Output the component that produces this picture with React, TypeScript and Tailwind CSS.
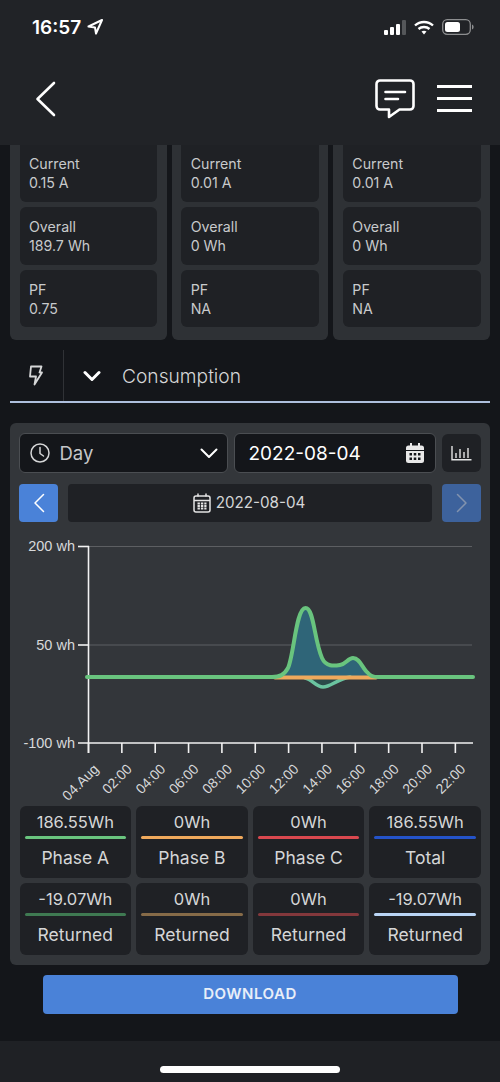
import React from "react";

const Phase = ({ label, value }: { label: string; value: string }) => (
  <div className="flex flex-col text-[14.2px] leading-[19px] text-[#c8cacc]">
    <span>{label}</span>
    <span>{value}</span>
  </div>
);

const cols = [
  { current: "0.15 A", overall: "189.7 Wh", pf: "0.75" },
  { current: "0.01 A", overall: "0 Wh", pf: "NA" },
  { current: "0.01 A", overall: "0 Wh", pf: "NA" },
];

const stats = [
  { v: "186.55Wh", l: "Phase A", c: "bg-[#69c47e]" },
  { v: "0Wh", l: "Phase B", c: "bg-[#efa95c]" },
  { v: "0Wh", l: "Phase C", c: "bg-[#d9484f]" },
  { v: "186.55Wh", l: "Total", c: "bg-[#2453c9]" },
  { v: "-19.07Wh", l: "Returned", c: "bg-[#3f7a52]" },
  { v: "0Wh", l: "Returned", c: "bg-[#866b48]" },
  { v: "0Wh", l: "Returned", c: "bg-[#83383c]" },
  { v: "-19.07Wh", l: "Returned", c: "bg-[#b9d4f5]" },
];

const xLabels = ["04.Aug", "02:00", "04:00", "06:00", "08:00", "10:00", "12:00", "14:00", "16:00", "18:00", "20:00", "22:00"];

const curve =
  "C280 677 284 675 288 668 C294 655 296 608 305.500 608 C314 608 314 640 322 658 C326 667 334 666 340 665 C346 664 348 658 353 658 C360 658 362 668 368 673 C370 676 373 677 378 677";

const Chart = () => (
  <svg width="462" height="274" viewBox="19 530 462 274" className="block">
    <g stroke="#5d5f62" strokeWidth="1.200">
      <line x1="89" x2="472" y1="546.500" y2="546.500" />
      <line x1="89" x2="472" y1="645" y2="645" />
    </g>
    <g stroke="#f2f2f2" strokeWidth="1.600">
      <line x1="88.500" x2="88.500" y1="546" y2="753" />
      <line x1="78" x2="473" y1="743" y2="743" />
      <line x1="78" x2="89" y1="546.500" y2="546.500" />
      <line x1="78" x2="89" y1="645" y2="645" />
      {xLabels.map((_, i) => {
        const x = 88.500 + i * 33.350;
        return <line key={i} x1={x} x2={x} y1="743" y2="753" />;
      })}
    </g>
    <g fill="#d8d9da" fontFamily="'Liberation Sans', Arial, sans-serif" fontSize="14.500" textAnchor="end">
      <text x="75" y="551">200 wh</text>
      <text x="75" y="650">50 wh</text>
      <text x="75" y="748">-100 wh</text>
    </g>
    <g fill="#d8d9da" fontFamily="'Liberation Sans', Arial, sans-serif" fontSize="14" textAnchor="end">
      {xLabels.map((t, i) => {
        const x = 99.500 + i * 33.350;
        return (
          <text key={t} x={x} y="770" transform={`rotate(-45 ${x} 770)`}>
            {t}
          </text>
        );
      })}
    </g>
    <path d={`M272 677 ${curve} Z`} fill="#2f6578" />
    <path d="M305 677 C312 679 316 687 323 687 C331 687 337 679 350 677 Z" fill="#2b4b4a" />
    <path d="M305 678 C312 679 316 687 323 687 C331 687 337 679 350 677" fill="none" stroke="#6bc4a0" strokeWidth="3.500" strokeLinecap="round" />
    <line x1="275" x2="376" y1="677.500" y2="677.500" stroke="#efa95c" strokeWidth="4" strokeLinecap="round" />
    <path d={`M87 677 L272 677 ${curve} L473 677`} fill="none" stroke="#69c47e" strokeWidth="4" strokeLinecap="round" strokeLinejoin="round" />
  </svg>
);

export default function App() {
  return (
    <div className="flex h-[1082px] w-[500px] flex-col overflow-hidden bg-[#14161a] font-['Inter',sans-serif]">
      <header className="flex h-[145px] shrink-0 flex-col bg-[#212327] text-white">
        <div className="flex h-[54px] items-center justify-between pl-[32px] pr-[26px]">
          <div className="flex items-center gap-[6px]">
            <span className="text-[19px] font-semibold leading-none">16:57</span>
            <svg width="16" height="16" viewBox="0 0 16 16" fill="none" stroke="white" strokeWidth="2" strokeLinejoin="round">
              <path d="M15 1 1.500 7.500 8 8.500 9 14.500Z" />
            </svg>
          </div>
          <div className="flex items-center gap-[8px]">
            <svg width="22" height="15" viewBox="0 0 22 15">
              <rect x="0" y="10" width="4" height="5" rx="1" fill="white" />
              <rect x="6" y="7" width="4" height="8" rx="1" fill="white" />
              <rect x="12" y="4" width="4" height="11" rx="1" fill="white" />
              <rect x="18" y="0" width="4" height="15" rx="1" fill="#55575a" />
            </svg>
            <svg width="20" height="15" viewBox="0 0 20 15" fill="none" stroke="white" strokeWidth="2.400">
              <path d="M1 5.500C6 .8 14 .8 19 5.500" />
              <path d="M4.500 9C7.500 6.300 12.500 6.300 15.500 9" />
              <path d="M10 14.500 7.500 11.500C9 10.500 11 10.500 12.500 11.500Z" fill="white" stroke="none" />
            </svg>
            <svg width="32" height="16" viewBox="0 0 32 16" fill="none">
              <rect x="0.700" y="0.700" width="27.600" height="14.600" rx="4.500" stroke="#8d8e90" strokeWidth="1.300" />
              <rect x="3" y="3" width="15" height="10" rx="2.500" fill="white" />
              <path d="M30 5.500c1.200.4 1.600 1.400 1.600 2.500s-.4 2.100-1.600 2.500Z" fill="#8d8e90" />
            </svg>
          </div>
        </div>
        <div className="flex flex-1 items-start justify-between pl-[35px] pr-[28px] pt-[25px]">
          <svg width="22" height="36" viewBox="0 0 22 36" className="mt-[2px]" fill="none" stroke="white" strokeWidth="2.600" strokeLinecap="round" strokeLinejoin="round">
            <path d="M19 2 2.500 18 19 34" />
          </svg>
          <div className="flex items-start gap-[22px]">
            <svg width="40" height="40" viewBox="0 0 40 40" fill="none" stroke="white" strokeLinejoin="round" strokeLinecap="round">
              <path d="M5 1.500H35A3.500 3.500 0 0 1 38.500 5V27A3.500 3.500 0 0 1 35 30.500H24.500L14 38V30.500H5A3.500 3.500 0 0 1 1.500 27V5A3.500 3.500 0 0 1 5 1.500Z" strokeWidth="2.600" />
              <path d="M10.500 13H30M10.500 20H23" strokeWidth="2.600" />
            </svg>
            <div className="mt-[6px] flex w-[35px] flex-col gap-[9px]">
              <span className="h-[3px] bg-white" />
              <span className="h-[3px] bg-white" />
              <span className="h-[3px] bg-white" />
            </div>
          </div>
        </div>
      </header>

      <main className="flex flex-1 flex-col px-[10px]">
        <section className="grid grid-cols-3 gap-[5px]">
          {cols.map((c, i) => (
            <div key={i} className="flex flex-col gap-[5px] rounded-b-[6px] bg-[#2e3135] px-[9.500px] pb-[13px]">
              <div className="h-[57px] rounded-b-[6px] bg-[#1f2125] pl-[9.500px] pt-[9px]">
                <Phase label="Current" value={c.current} />
              </div>
              <div className="h-[58px] rounded-[6px] bg-[#1f2125] pl-[9.500px] pt-[10px]">
                <Phase label="Overall" value={c.overall} />
              </div>
              <div className="h-[57px] rounded-[6px] bg-[#1f2125] pl-[9.500px] pt-[10px]">
                <Phase label="PF" value={c.pf} />
              </div>
            </div>
          ))}
        </section>

        <section className="mt-[10px] flex h-[53px] items-stretch border-b-[2px] border-[#aebfdd]">
          <div className="flex w-[54px] items-center border-r border-[#303236] pl-[19px]">
            <svg width="14" height="21" viewBox="0 0 14 21" fill="none" stroke="#d6d7d8" strokeWidth="1.800" strokeLinejoin="round">
              <path d="M2 1.500H12.500L10.500 7.500H13L5.500 19.500 7 11.500H1Z" />
            </svg>
          </div>
          <div className="flex items-center pl-[19px]">
            <svg width="18" height="12" viewBox="0 0 18 12" fill="none" stroke="white" strokeWidth="3" strokeLinecap="round" strokeLinejoin="round">
              <path d="M2 2.500 9 9.500 16 2.500" />
            </svg>
            <span className="ml-[21px] pt-[2px] text-[19.200px] font-light text-[#d5d6d7]">Consumption</span>
          </div>
        </section>

        <section className="mt-[20px] flex h-[542px] flex-col rounded-[6px] bg-[#33363a] px-[9px] pt-[10px]">
          <div className="flex h-[40px] gap-[6px]">
            <div className="flex w-[209px] items-center rounded-[6px] border-[1.500px] border-[#4b4e52] bg-[#14161a] pl-[9.500px] pr-[9.500px]">
              <svg width="20" height="20" viewBox="0 0 20 20" fill="none" stroke="#d5d6d7" strokeWidth="1.500" strokeLinecap="round" strokeLinejoin="round">
                <circle cx="10" cy="10" r="9" />
                <path d="M10 4.500V10.500L13.500 13" />
              </svg>
              <span className="ml-[10px] flex-1 pt-[2px] text-[18.500px] text-[#c6c7c9]">Day</span>
              <svg width="18" height="11" viewBox="0 0 18 11" fill="none" stroke="white" strokeWidth="2" strokeLinecap="round" strokeLinejoin="round">
                <path d="M1.500 1.500 9 9 16.500 1.500" />
              </svg>
            </div>
            <div className="flex w-[202px] items-center justify-between rounded-[6px] border-[1.500px] border-[#4b4e52] bg-[#14161a] pl-[13.500px] pr-[11px]">
              <span className="pt-[2px] text-[19px] text-white">2022-08-04</span>
              <svg width="18" height="20" viewBox="0 0 18 20">
                <path d="M4 0h2v2.500h6V0h2v2.500h1.500A2.500 2.500 0 0 1 18 5v2H0V5a2.500 2.500 0 0 1 2.500-2.500H4Z" fill="#e8e8e8" />
                <path d="M0 8h18v9.500a2.500 2.500 0 0 1-2.500 2.500h-13A2.500 2.500 0 0 1 0 17.500Z" fill="#e8e8e8" />
                <g fill="#14161a">
                  <rect x="3.500" y="10" width="2.500" height="2.500" />
                  <rect x="7.750" y="10" width="2.500" height="2.500" />
                  <rect x="12" y="10" width="2.500" height="2.500" />
                  <rect x="3.500" y="14.500" width="2.500" height="2.500" />
                  <rect x="7.750" y="14.500" width="2.500" height="2.500" />
                  <rect x="12" y="14.500" width="2.500" height="2.500" />
                </g>
              </svg>
            </div>
            <div className="my-[1px] flex w-[39px] items-center justify-center rounded-[6px] bg-[#1f2125]">
              <svg width="21" height="15" viewBox="0 0 21 15" fill="none" stroke="#e4e5e6" strokeWidth="1.400">
                <path d="M1 0V13.800H20.500" />
                <path d="M5 12V7M9 12V3M13 12V6M17 12V2" />
              </svg>
            </div>
          </div>

          <div className="mt-[11px] flex h-[38px] justify-between">
            <div className="flex w-[39px] items-center justify-center rounded-[4px] bg-[#4a82d8]">
              <svg width="12" height="20" viewBox="0 0 12 20" fill="none" stroke="white" strokeWidth="1.500" strokeLinecap="round" strokeLinejoin="round">
                <path d="M10.500 1.500 2 10 10.500 18.500" />
              </svg>
            </div>
            <div className="flex w-[364px] items-center justify-center gap-[5px] rounded-[4px] bg-[#1f2125] pr-[2px]">
              <svg width="18" height="20" viewBox="0 0 18 20" fill="none" stroke="#e4e4e4" strokeWidth="1.500">
                <rect x="1" y="3" width="16" height="16" rx="2" />
                <path d="M1 7.500H17M5 .5V3.500M13 .5V3.500" />
                <path d="M4.500 10.500H13.500M4.500 13H13.500M4.500 15.500H13.500" strokeWidth="1.800" strokeDasharray="2.400 1" />
              </svg>
              <span className="text-[15.200px] text-[#d5d6d7]">2022-08-04</span>
            </div>
            <div className="flex w-[39px] items-center justify-center rounded-[4px] bg-[#3d629c]">
              <svg width="12" height="20" viewBox="0 0 12 20" fill="none" stroke="#8293ae" strokeWidth="1.500" strokeLinecap="round" strokeLinejoin="round">
                <path d="M1.500 1.500 10 10 1.500 18.500" />
              </svg>
            </div>
          </div>

          <div className="mt-[8px] h-[274px]">
            <Chart />
          </div>

          <div className="ml-[0.500px] mt-[2px] grid grid-cols-4 gap-[5px]">
            {stats.map((s, i) => (
              <div key={i} className="flex h-[72px] flex-col items-center rounded-[6px] bg-[#1f2125] px-[5px] pt-[6px]">
                <span className="text-[16.500px] leading-[20px] text-[#d5d6d7]">{s.v}</span>
                <span className={`mt-[4px] h-[3px] w-full rounded-full ${s.c}`} />
                <span className="mt-[7px] text-[17.500px] leading-[24px] text-[#d5d6d7]">{s.l}</span>
              </div>
            ))}
          </div>
        </section>

        <div className="mt-[10px] flex justify-center">
          <button className="flex h-[39px] w-[415px] items-center justify-center rounded-[4px] bg-[#4a82d8] text-[15px] font-semibold tracking-[0.035em] text-[#e8eef8]">
            DOWNLOAD
          </button>
        </div>
      </main>

      <footer className="flex h-[41px] shrink-0 items-end justify-center bg-[#1f2125] pb-[9px]">
        <span className="h-[7px] w-[180px] rounded-full bg-white" />
      </footer>
    </div>
  );
}
